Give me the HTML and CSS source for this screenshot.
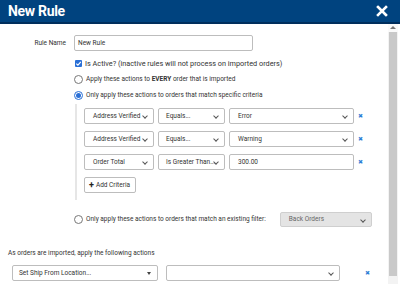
FILE: index.html
```html
<!DOCTYPE html>
<html>
<head>
<meta charset="utf-8">
<link rel="stylesheet" href="styles.css">
</head>
<body>
<div class="header">
  <div class="title">New Rule</div>
  <svg class="close" width="12" height="12" viewBox="0 0 12 12"><path d="M2 2L10 10M10 2L2 10" stroke="#fff" stroke-width="2.6" stroke-linecap="square"/></svg>
</div>
<div class="body">
  <div class="content">
    <div class="row-name">
      <div class="label">Rule Name</div>
      <div class="input name-input">New Rule</div>
    </div>
    <div class="opt check-row">
      <span class="checkbox"><svg width="7" height="7" viewBox="0 0 7 7"><path d="M1.3 3.6L2.9 5.1L5.8 1.9" fill="none" stroke="#fff" stroke-width="1.2"/></svg></span>
      <span class="check-text">Is Active? (inactive rules will not process on imported orders)</span>
    </div>
    <div class="opt radio-row">
      <span class="radio"></span>
      <span>Apply these actions to <b>EVERY</b> order that is imported</span>
    </div>
    <div class="opt radio-row">
      <span class="radio on"></span>
      <span>Only apply these actions to orders that match specific criteria</span>
    </div>
    <div class="criteria">
      <div class="crit-row">
        <div class="select s1">Address Verified<i class="chev"></i></div>
        <div class="select s2">Equals...<i class="chev"></i></div>
        <div class="select s3">Error<i class="chev"></i></div>
        <span class="remove">✖</span>
      </div>
      <div class="crit-row">
        <div class="select s1">Address Verified<i class="chev"></i></div>
        <div class="select s2">Equals...<i class="chev"></i></div>
        <div class="select s3">Warning<i class="chev"></i></div>
        <span class="remove">✖</span>
      </div>
      <div class="crit-row">
        <div class="select s1">Order Total<i class="chev"></i></div>
        <div class="select s2">Is Greater Than...<i class="chev"></i></div>
        <div class="input s3">300.00</div>
        <span class="remove">✖</span>
      </div>
      <div class="btn"><b class="plus">+</b>Add Criteria</div>
    </div>
    <div class="opt radio-row filter-row">
      <span class="radio"></span>
      <span class="filter-text">Only apply these actions to orders that match an existing filter:</span>
      <div class="select disabled">Back Orders<i class="chev"></i></div>
    </div>
    <div class="actions-title">As orders are imported, apply the following actions</div>
    <div class="action-row">
      <div class="select a1">Set Ship From Location...<i class="caret"></i></div>
      <div class="select a2"><i class="chev"></i></div>
      <span class="remove">✖</span>
    </div>
  </div>
  <div class="scrollbar">
    <div class="sb-up"></div>
    <div class="sb-thumb"></div>
    <div class="sb-end"></div>
  </div>
</div>
</body>
</html>
```
FILE: styles.css
```css
* { box-sizing: border-box; }
html, body { margin: 0; padding: 0; }
body {
  width: 400px;
  height: 284px;
  overflow: hidden;
  font-family: Roboto, "Liberation Sans", sans-serif;
  font-size: 6.5px;
  color: #333;
  background: #fff;
}
.header {
  height: 24px;
  background: #00437f;
  border-bottom: 2px solid #002e5c;
  display: flex;
  align-items: center;
  justify-content: space-between;
  padding: 0 12px 0 8px;
}
.title {
  color: #fff;
  font-weight: 700;
  font-size: 14px;
  letter-spacing: -0.3px;
}
.body {
  display: flex;
  height: 260px;
}
.content {
  flex: 1;
  padding-top: 11px;
}
.row-name {
  display: flex;
  align-items: center;
  height: 16px;
}
.label {
  width: 66px;
  text-align: right;
  margin-right: 8px;
}
.input, .select {
  height: 16px;
  border: 1px solid #bdbdbd;
  border-radius: 2px;
  background: #fff;
  display: flex;
  align-items: center;
  padding-left: 4px;
  color: #333;
}
.name-input { width: 179px; padding-left: 3px; }
.opt {
  display: flex;
  align-items: center;
  padding-left: 74px;
  height: 10px;
}
.check-row { margin-top: 7px; }
.check-text { font-size: 7.3px; }
.radio-row { margin-top: 6px; }
.checkbox {
  width: 7px;
  height: 7px;
  border-radius: 1px;
  background: #2a6fd6;
  margin-left: 1px;
  margin-right: 3px;
  display: flex;
}
.radio {
  width: 9px;
  height: 9px;
  border-radius: 50%;
  border: 1px solid #777;
  margin-right: 3px;
  flex: none;
  display: flex;
  align-items: center;
  justify-content: center;
}
.radio.on { border-color: #2a6fd6; }
.radio.on::after {
  content: "";
  width: 5px;
  height: 5px;
  border-radius: 50%;
  background: #2a6fd6;
}
.criteria {
  margin: 4px 0 0 75px;
  border-left: 2px solid #e6e6e6;
  padding: 4px 0 7px 7px;
  display: flex;
  flex-direction: column;
  gap: 7px;
}
.crit-row {
  display: flex;
  align-items: center;
  gap: 4px;
}
.select { position: relative; padding-left: 8px; }
.s1 { width: 70px; }
.s2 { width: 67px; padding-left: 7px; }
.s3 { width: 125px; }
.crit-row .input.s3 { padding-left: 8px; }
.chev {
  position: absolute;
  right: 6px;
  top: 5px;
  width: 4px;
  height: 4px;
  border-right: 1px solid #555;
  border-bottom: 1px solid #555;
  transform: rotate(45deg);
}
.caret {
  position: absolute;
  right: 6px;
  top: 6px;
  border-left: 2.5px solid transparent;
  border-right: 2.5px solid transparent;
  border-top: 3px solid #444;
}
.remove {
  color: #2f7fd6;
  font-size: 6px;
  line-height: 1;
}
.btn {
  align-self: flex-start;
  height: 16px;
  border: 1px solid #bdbdbd;
  border-radius: 2px;
  display: flex;
  align-items: center;
  padding: 0 5px 0 4px;
  color: #333;
}
.plus { font-size: 9px; margin-right: 2px; color: #222; }
.filter-row { margin-top: 12px; height: 14px; }
.filter-text { margin-right: 14px; }
.select.disabled {
  width: 92px;
  height: 15px;
  background: #e4e4e4;
  color: #666;
  border-color: #cfcfcf;
}
.actions-title {
  margin-top: 23px;
  padding-left: 8px;
}
.action-row {
  display: flex;
  align-items: center;
  margin-top: 8px;
  padding-left: 12px;
}
.a1 { width: 146px; padding-left: 6px; }
.a2 { width: 174px; margin-left: 8px; }
.action-row .remove { margin-left: 25px; }
.scrollbar {
  width: 10px;
  margin-right: 2px;
  display: flex;
  flex-direction: column;
  background: #f3f3f3;
}
.sb-up {
  height: 8px;
  background: #fafafa;
  position: relative;
}
.sb-up::after {
  content: "";
  position: absolute;
  left: 2px;
  top: 2px;
  border-left: 3px solid transparent;
  border-right: 3px solid transparent;
  border-bottom: 3px solid #777;
}
.sb-thumb {
  flex: 1;
  background: #c9c9c9;
  margin: 0 1px;
}
.sb-end { height: 8px; background: #f3f3f3; }
```
